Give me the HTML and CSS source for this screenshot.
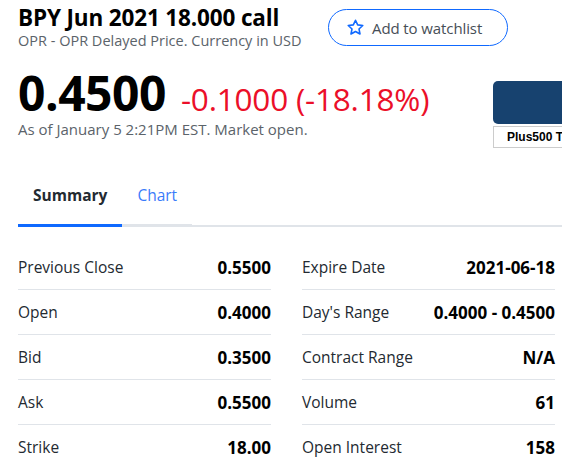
FILE: index.html
```html
<!DOCTYPE html>
<html lang="en">
<head>
<meta charset="utf-8">
<title>BPY Jun 2021 18.000 call</title>
<link rel="stylesheet" href="styles.css">
</head>
<body>
<div class="page">
  <header class="quote-header">
    <div class="titles">
      <h1 class="title">BPY Jun 2021 18.000 call</h1>
      <div class="subtitle">OPR - OPR Delayed Price. Currency in USD</div>
    </div>
    <button class="watch-btn">
      <svg class="star" viewBox="0 0 24 24" width="19" height="19"><path d="M12 2.8l2.75 5.9 6.45.75-4.8 4.4 1.3 6.35L12 17l-5.7 3.2 1.3-6.35-4.8-4.4 6.45-.75z" fill="none" stroke="currentColor" stroke-width="2" stroke-linejoin="round"/></svg>
      <span>Add to watchlist</span>
    </button>
  </header>

  <section class="price-row">
    <div class="price-block">
      <div class="price-line">
        <span class="price">0.4500</span>
        <span class="change">-0.1000 (-18.18%)</span>
      </div>
      <div class="asof">As of January 5 2:21PM EST. Market open.</div>
    </div>
    <div class="ad">
      <div class="ad-banner"></div>
      <div class="ad-label">Plus500 Trading</div>
    </div>
  </section>

  <nav class="tabs">
    <a class="tab active">Summary</a>
    <a class="tab">Chart</a>
  </nav>

  <section class="stats">
    <div class="col">
      <div class="row"><span class="label">Previous Close</span><span class="value">0.5500</span></div>
      <div class="row"><span class="label">Open</span><span class="value">0.4000</span></div>
      <div class="row"><span class="label">Bid</span><span class="value">0.3500</span></div>
      <div class="row"><span class="label">Ask</span><span class="value">0.5500</span></div>
      <div class="row"><span class="label">Strike</span><span class="value">18.00</span></div>
    </div>
    <div class="col">
      <div class="row"><span class="label">Expire Date</span><span class="value">2021-06-18</span></div>
      <div class="row"><span class="label">Day's Range</span><span class="value">0.4000 - 0.4500</span></div>
      <div class="row"><span class="label">Contract Range</span><span class="value">N/A</span></div>
      <div class="row"><span class="label">Volume</span><span class="value">61</span></div>
      <div class="row"><span class="label">Open Interest</span><span class="value">158</span></div>
    </div>
  </section>
</div>
</body>
</html>
```
FILE: styles.css
```css
html, body {
  margin: 0;
  padding: 0;
  background: #fff;
  overflow: hidden;
}
body {
  font-family: "Open Sans", "Noto Sans", "Liberation Sans", sans-serif;
  color: #232a31;
}
.page {
  width: 562px;
  height: 466px;
  overflow: hidden;
}
.quote-header {
  display: flex;
  align-items: flex-start;
  padding: 4px 0 0 18px;
}
.titles {
  width: 310px;
  white-space: nowrap;
}
.title {
  margin: 0;
  font-size: 22.5px;
  line-height: 28px;
  font-weight: 700;
  color: #000;
  letter-spacing: -0.15px;
}
.subtitle {
  font-size: 14.5px;
  line-height: 18px;
  color: #5b636a;
}
.watch-btn {
  margin-top: 5px;
  display: flex;
  align-items: center;
  gap: 7px;
  width: 180px;
  height: 37px;
  padding: 0 0 0 17px;
  border: 1px solid #0f69ff;
  border-radius: 20px;
  background: #fff;
  font-family: inherit;
  font-size: 15px;
  color: #464e56;
  letter-spacing: -0.1px;
  box-sizing: border-box;
  white-space: nowrap;
}
.star {
  color: #0f69ff;
  flex: none;
}
.price-row {
  display: flex;
  justify-content: space-between;
  padding-left: 18px;
  margin-top: 17px;
}
.price-line {
  display: flex;
  align-items: baseline;
  gap: 15px;
}
.price {
  font-size: 48px;
  line-height: 52px;
  font-weight: 700;
  color: #000;
  letter-spacing: -0.5px;
}
.change {
  font-size: 31.5px;
  font-weight: 400;
  color: #eb0f29;
  letter-spacing: -0.2px;
}
.asof {
  font-size: 15px;
  line-height: 18px;
  color: #5b636a;
}
.ad {
  width: 72px;
  margin-top: 14px;
  flex: none;
  margin-right: -3px;
}
.ad-banner {
  height: 43px;
  background: #17426f;
  border-radius: 5px 0 0 5px;
}
.ad-label {
  margin-top: 2px;
  height: 22px;
  border: 1px solid #ccc;
  border-right: none;
  box-sizing: border-box;
  font-family: "Liberation Sans", Arial, sans-serif;
  font-weight: 700;
  font-size: 12px;
  line-height: 20px;
  padding-left: 13px;
  color: #000;
  white-space: nowrap;
  overflow: hidden;
}
.tabs {
  display: flex;
  margin: 36px 0 0 18px;
  border-bottom: 2px solid #e0e4e9;
}
.tab {
  padding: 0 15px 18px;
  line-height: 22px;
  font-size: 15.5px;
  color: #3a7bfa;
  border-bottom: 3px solid #e0e4e9;
  margin-bottom: -2px;
}
.tab.active {
  font-weight: 700;
  color: #232a31;
  border-bottom-color: #0f69ff;
}
.stats {
  display: flex;
  gap: 31px;
  padding: 18px 0 0 18px;
}
.col {
  width: 253px;
}
.row {
  display: flex;
  justify-content: space-between;
  align-items: center;
  height: 44px;
  border-bottom: 1px solid #e0e4e9;
}
.label {
  font-size: 15.5px;
  color: #232a31;
}
.value {
  font-size: 17px;
  font-weight: 700;
  color: #000;
}
```
